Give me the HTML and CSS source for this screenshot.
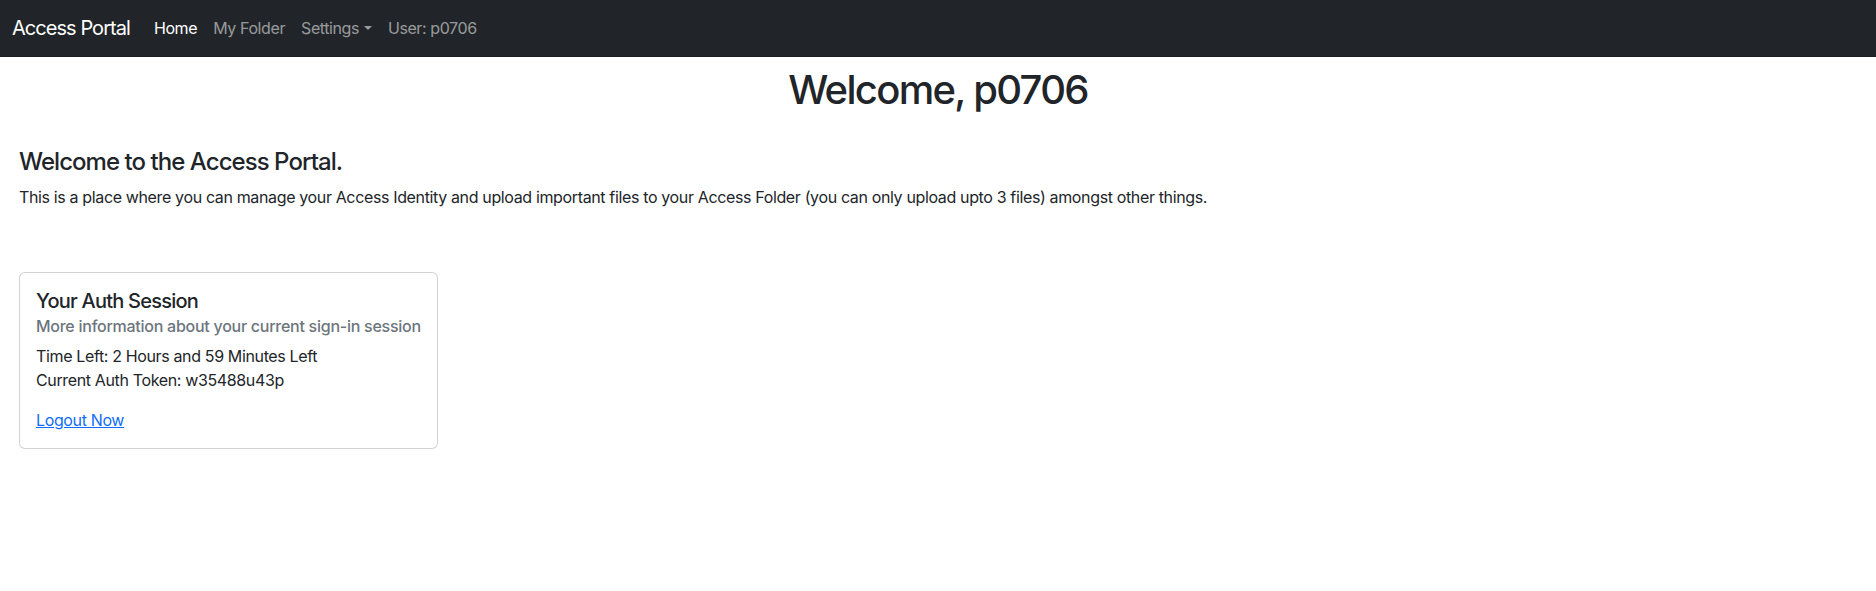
FILE: index.html
```html
<!DOCTYPE html>
<html lang="en">
<head>
<meta charset="utf-8">
<title>Access Portal</title>
<link rel="stylesheet" href="styles.css">
</head>
<body>
<nav class="navbar">
  <div class="navbar-inner">
    <a class="brand" href="#">Access Portal</a>
    <ul class="nav">
      <li><a class="nav-link active" href="#">Home</a></li>
      <li><a class="nav-link" href="#">My Folder</a></li>
      <li><a class="nav-link dropdown-toggle" href="#">Settings</a></li>
      <li><span class="nav-link">User: p0706</span></li>
    </ul>
  </div>
</nav>
<main class="page">
  <h1 class="title">Welcome, p0706</h1>
  <section class="intro">
    <h4 class="intro-heading">Welcome to the Access Portal.</h4>
    <p class="intro-text">This is a place where you can manage your Access Identity and upload important files to your Access Folder (you can only upload upto 3 files) amongst other things.</p>
  </section>
  <div class="card">
    <div class="card-body">
      <h5 class="card-title">Your Auth Session</h5>
      <h6 class="card-subtitle">More information about your current sign-in session</h6>
      <p class="card-text">Time Left: 2 Hours and 59 Minutes Left<br>Current Auth Token: w35488u43p</p>
      <a href="#" class="card-link">Logout Now</a>
    </div>
  </div>
</main>
</body>
</html>
```

FILE: styles.css
```css
* { box-sizing: border-box; }

html, body {
  margin: 0;
  padding: 0;
}

body {
  font-family: Inter, "Liberation Sans", Arial, sans-serif;
  font-size: 16px;
  line-height: 1.5;
  letter-spacing: -0.36px;
  color: #212529;
  background: #fff;
}

.navbar {
  background: #212529;
  padding: 8px 0;
  border-bottom: 1px solid #1b1e21;
}

.navbar-inner {
  display: flex;
  align-items: center;
  padding: 0 12px;
}

.brand {
  font-size: 20px;
  line-height: 30px;
  padding: 5px 0;
  margin-right: 16px;
  color: #fff;
  text-decoration: none;
  white-space: nowrap;
  letter-spacing: -0.95px;
}

.nav {
  display: flex;
  list-style: none;
  margin: 0;
  padding: 0;
}

.nav-link {
  display: block;
  padding: 8px;
  line-height: 24px;
  letter-spacing: -0.4px;
  color: rgba(255, 255, 255, 0.55);
  text-decoration: none;
}

.nav-link.active {
  color: #fff;
}

.dropdown-toggle::after {
  content: "";
  display: inline-block;
  margin-left: 0.3em;
  vertical-align: 0.255em;
  border-top: 0.28em solid;
  border-right: 0.26em solid transparent;
  border-left: 0.26em solid transparent;
  border-bottom: 0;
}

.page {
  padding: 0 19px;
}

.title {
  text-align: center;
  font-size: 40px;
  font-weight: 500;
  line-height: 1.2;
  letter-spacing: -1.7px;
  margin: 9px 0 8px;
}

.intro {
  margin-top: 34px;
}

.intro-heading {
  font-size: 24px;
  font-weight: 500;
  line-height: 1.2;
  letter-spacing: -0.95px;
  margin: 0 0 8px;
}

.intro-text {
  margin: 0 0 16px;
}

.card {
  display: inline-block;
  margin-top: 47px;
  border: 1px solid rgba(0, 0, 0, 0.175);
  border-radius: 6px;
  background: #fff;
}

.card-body {
  padding: 16px;
}

.card-title {
  font-size: 20px;
  font-weight: 500;
  line-height: 1.2;
  letter-spacing: -0.77px;
  margin: 0 0 8px;
}

.card-subtitle {
  font-size: 16px;
  font-weight: 500;
  line-height: 1.2;
  letter-spacing: -0.26px;
  margin: -4px 0 8px;
  color: #6c757d;
  white-space: nowrap;
}

.card-text {
  margin: 0 0 16px;
}

.card-link {
  color: #0d6efd;
  text-decoration: underline;
}
```
